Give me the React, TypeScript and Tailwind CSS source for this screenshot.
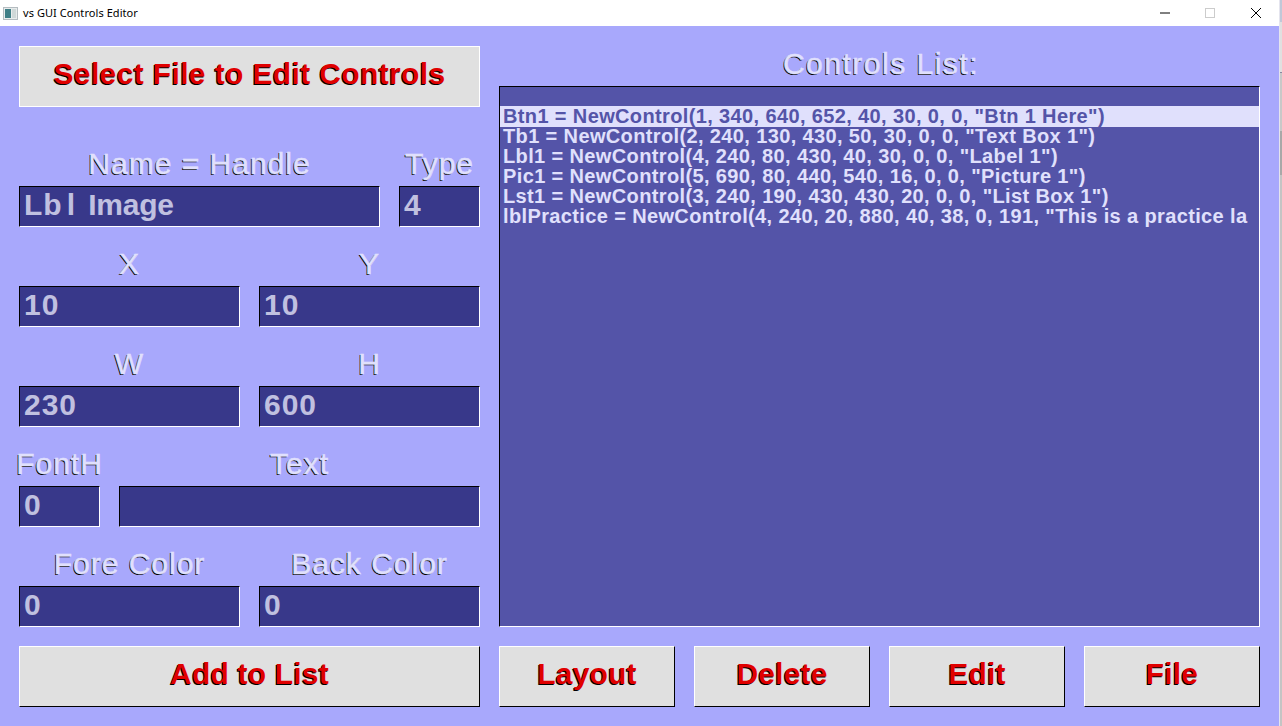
import type { ReactNode } from "react";

const shadow = "[-webkit-text-stroke:0.5px_#e0e0fc] [text-shadow:-1px_1px_0_#000]";
const redShadow = "[text-shadow:-1px_1px_0_#000]";
const font = "font-['Liberation_Sans',Arial,sans-serif]";

function Label({ text }: { text: string }) {
  return (
    <div className={`h-[59px] flex items-end justify-center pb-[6px] text-[30px] leading-[32px] tracking-[1px] whitespace-nowrap text-[#e0e0fc] ${shadow}`}>
      {text}
    </div>
  );
}

function Input({ value }: { value?: ReactNode }) {
  return (
    <div className="h-[41px] bg-[#38388a] border-t border-l border-t-black border-l-black border-b border-r border-b-white border-r-white pl-[4px] text-[30px] leading-[36px] font-bold text-[#c0c0e0] tracking-[1px] whitespace-pre overflow-hidden">
      {value}
    </div>
  );
}

function Field({ label, value, width }: { label: string; value?: ReactNode; width: string }) {
  return (
    <div className={`flex flex-col ${width}`}>
      <Label text={label} />
      <Input value={value} />
    </div>
  );
}

function Button({ text, className = "" }: { text: string; className?: string }) {
  return (
    <div className={`h-[61px] pb-[6px] bg-[#e0e0e0] border-t border-l border-t-white border-l-white border-b border-r border-b-black border-r-black flex items-center justify-center text-[30px] tracking-[0.2px] font-bold text-[#e00000] ${redShadow} ${className}`}>
      {text}
    </div>
  );
}

const rows = [
  'Tb1 = NewControl(2, 240, 130, 430, 50, 30, 0, 0, "Text Box 1")',
  'Lbl1 = NewControl(4, 240, 80, 430, 40, 30, 0, 0, "Label 1")',
  'Pic1 = NewControl(5, 690, 80, 440, 540, 16, 0, 0, "Picture 1")',
  'Lst1 = NewControl(3, 240, 190, 430, 430, 20, 0, 0, "List Box 1")',
  'lblPractice = NewControl(4, 240, 20, 880, 40, 38, 0, 191, "This is a practice la',
];

export default function App() {
  return (
    <div className={`w-[1282px] h-[726px] overflow-hidden flex bg-[#a8a8fc] ${font}`}>
      <div className="w-[1279px] flex flex-col">
        <div className="h-[26px] shrink-0 bg-white flex items-center text-[11px] tracking-[0.06px] text-black font-['Noto_Sans',sans-serif]">
          <svg width="15" height="13" viewBox="0 0 15 13" className="ml-[3px] mr-[5px]">
            <rect x="0.5" y="0.5" width="14" height="12" fill="#e8ecec" stroke="#b4bcc0" />
            <rect x="2" y="2" width="6" height="9" fill="#3f7f86" />
            <rect x="9" y="2" width="4" height="9" fill="#cfd8d8" />
          </svg>
          <span>vs GUI Controls Editor</span>
          <div className="ml-auto flex">
            <svg width="46" height="26" viewBox="0 0 46 26"><path d="M19 13h10" stroke="#000" /></svg>
            <svg width="46" height="26" viewBox="0 0 46 26"><rect x="18.5" y="8.5" width="9" height="9" fill="none" stroke="#ccc" /></svg>
            <svg width="46" height="26" viewBox="0 0 46 26"><path d="M18 8l10 10M28 8L18 18" stroke="#000" /></svg>
          </div>
        </div>
        <div className="flex-1 flex pl-[19px] pt-[20px] gap-[19px]">
          <div className="w-[461px] flex flex-col">
            <div className={`h-[61px] pb-[6px] bg-[#e0e0e0] border border-white flex items-center justify-center text-[30px] tracking-[0.37px] font-bold text-[#e00000] ${redShadow}`}>
              Select File to Edit Controls
            </div>
            <div className="flex gap-[19px] mt-[20px]">
              <Field
                label="Name = Handle"
                value={
                  <>
                    Lb<span className="mx-[4px]">l</span>
                    <span className="tracking-[-0.2px]"> Image</span>
                  </>
                }
                width="w-[361px]"
              />
              <Field label="Type" value="4" width="w-[81px]" />
            </div>
            <div className="flex gap-[19px]">
              <Field label="X" value="10" width="w-[221px]" />
              <Field label="Y" value="10" width="w-[221px]" />
            </div>
            <div className="flex gap-[19px]">
              <Field label="W" value="230" width="w-[221px]" />
              <Field label="H" value="600" width="w-[221px]" />
            </div>
            <div className="flex gap-[19px]">
              <Field label="FontH" value="0" width="w-[81px]" />
              <Field label="Text" width="w-[361px]" />
            </div>
            <div className="flex gap-[19px]">
              <Field label="Fore Color" value="0" width="w-[221px]" />
              <Field label="Back Color" value="0" width="w-[221px]" />
            </div>
            <Button text="Add to List" className="mt-[19px]" />
          </div>
          <div className="w-[761px] flex flex-col">
            <div className={`h-[40px] pb-[5px] pl-[3px] flex items-center justify-center text-[30px] tracking-[1.5px] text-[#e0e0fc] ${shadow}`}>
              Controls List:
            </div>
            <div className="h-[541px] bg-[#5454a8] border-t border-l border-t-black border-l-black border-b border-r border-b-white border-r-white pt-[19px] text-[20px] tracking-[0.37px] font-bold leading-[20px] text-[#e0e0fc] whitespace-pre overflow-hidden">
              <div className="h-[21px] bg-[#e0e0fc] text-[#5454a8] pl-[3px]">Btn1 = NewControl(1, 340, 640, 652, 40, 30, 0, 0, "Btn 1 Here")</div>
              {rows.map((r) => (
                <div key={r} className="h-[20px] leading-[18px] pl-[3px]">{r}</div>
              ))}
            </div>
            <div className="flex gap-[19px] mt-[19px]">
              <Button text="Layout" className="w-[176px]" />
              <Button text="Delete" className="w-[176px]" />
              <Button text="Edit" className="w-[176px]" />
              <Button text="File" className="w-[176px]" />
            </div>
          </div>
        </div>
      </div>
      <div className="w-[3px] flex flex-col border-l border-l-[#e4e4ee] bg-[#c4c4c4]">
        <div className="h-[22px] bg-[#c0c8d8]" />
        <div className="h-[50px] bg-[#e0e0e0]" />
        <div className="h-px bg-[#8888a0]" />
        <div className="h-[58px] bg-[#c8c8c8]" />
        <div className="h-[44px] bg-[#a8a8a8]" />
      </div>
    </div>
  );
}
